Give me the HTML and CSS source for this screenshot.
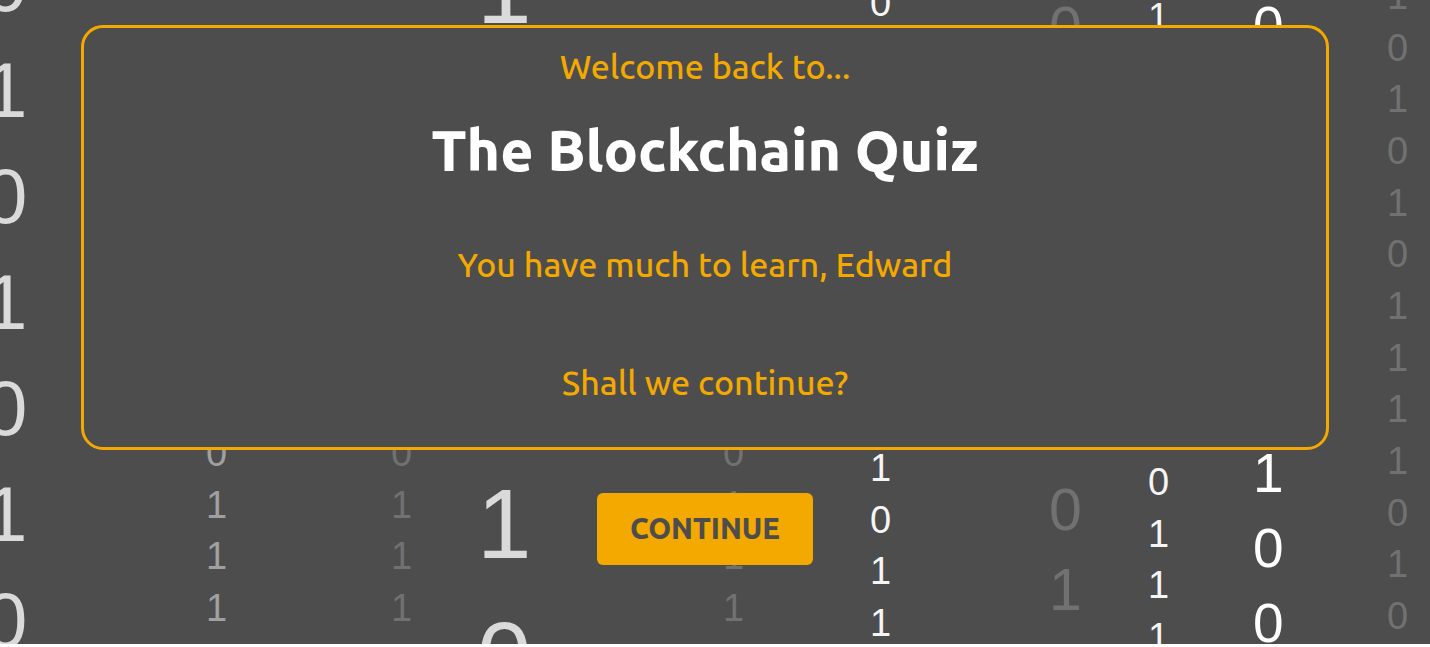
FILE: index.html
```
<!DOCTYPE html>
<html lang="en">
<head>
<meta charset="utf-8">
<meta name="viewport" content="width=device-width, initial-scale=1">
<title>The Blockchain Quiz</title>
<link rel="stylesheet" href="styles.css">
</head>
<body>
<main class="stage">
  <div class="rain" aria-hidden="true">
    <div class="drop drop-edge">0<br>1<br>0<br>1<br>0<br>1<br>0</div>
    <div class="drop small soft col-a high">1</div>
    <div class="drop small soft col-a low">0<br>1<br>1<br>1</div>
    <div class="drop small faint col-b high">1</div>
    <div class="drop small faint col-b low">0<br>1<br>1<br>1</div>
    <div class="drop huge col-c huge-high">1</div>
    <div class="drop huge col-c huge-low">1<br>0</div>
    <div class="drop small faint col-d high">1</div>
    <div class="drop small faint col-d low">0<br>1<br>1<br>1</div>
    <div class="drop small bright col-e-high">0</div>
    <div class="drop small bright col-e-low">1<br>0<br>1<br>1</div>
    <div class="drop large faint col-f-high">0</div>
    <div class="drop large faint col-f-low">0<br>1</div>
    <div class="drop small bright col-g-high">1</div>
    <div class="drop small bright col-g-low">0<br>1<br>1<br>1</div>
    <div class="drop medium col-h-high">0</div>
    <div class="drop medium col-h-low">1<br>0<br>0</div>
    <div class="drop small faint col-i">1<br>0<br>1<br>0<br>1<br>0<br>1<br>1<br>1<br>1<br>0<br>1<br>0</div>
  </div>
  <section class="card">
    <p class="line">Welcome back to...</p>
    <h1 class="title">The Blockchain Quiz</h1>
    <p class="line greeting">You have much to learn, Edward</p>
    <p class="line question">Shall we continue?</p>
  </section>
  <button class="continue" type="button">CONTINUE</button>
</main>
</body>
</html>
```

FILE: styles.css
```
* {
  box-sizing: border-box;
}

body {
  margin: 0;
  background: #ffffff;
  font-family: Ubuntu, "Noto Sans", sans-serif;
}

.stage {
  position: relative;
  display: flex;
  flex-direction: column;
  align-items: center;
  gap: 43px;
  padding: 25px 101px 79px 81px;
  overflow: hidden;
  background: #4d4d4d;
}

/* Falling binary digits behind the content */
.rain {
  position: absolute;
  inset: 0;
  overflow: hidden;
  font-family: "Liberation Sans", Arial, sans-serif;
  line-height: 1.36;
  user-select: none;
}

.drop { position: absolute; }

.small { font-size: 38px; }
.medium { font-size: 55px; color: #ffffff; }
.large { font-size: 59px; }
.huge { font-size: 98px; color: #dadada; }

.faint { color: #717171; }
.soft { color: #a0a0a0; }
.bright { color: #f5f5f5; }

.high { top: -38px; }
.low { top: 428px; }

.drop-edge { left: -16px; top: -69px; font-size: 78px; color: #dadada; }
.col-a { left: 206px; }
.col-b { left: 391px; }
.col-c { left: 477px; }
.huge-high { top: -77px; }
.huge-low { top: 458px; }
.col-d { left: 723px; }
.col-e-high { left: 870px; top: -22px; }
.col-e-low { left: 870px; top: 443px; }
.col-f-high { left: 1049px; top: -12px; }
.col-f-low { left: 1049px; top: 470px; }
.col-g-high { left: 1148px; top: -8px; }
.col-g-low { left: 1148px; top: 457px; }
.col-h-high { left: 1253px; top: -11px; }
.col-h-low { left: 1253px; top: 436px; }
.col-i { left: 1387px; top: -29px; }

.card {
  position: relative;
  width: 100%;
  padding: 14px 24px 41px;
  border: 3px solid #f3a900;
  border-radius: 22px;
  background: #4d4d4d;
  text-align: center;
}

.line {
  margin: 0;
  color: #f3a900;
  font-size: 34px;
  font-weight: 500;
  line-height: 48px;
}

.title {
  margin: 24px 0 54px;
  color: #ffffff;
  font-size: 57px;
  font-weight: 800;
  line-height: 72px;
}

.question { margin-top: 70px; }

.continue {
  position: relative;
  min-width: 216px;
  height: 72px;
  padding: 0 32px 2px;
  border: 0;
  border-radius: 6px;
  background: #f3a900;
  color: #4d4d4d;
  font-family: inherit;
  font-size: 29px;
  font-weight: 800;
  cursor: pointer;
}
```
